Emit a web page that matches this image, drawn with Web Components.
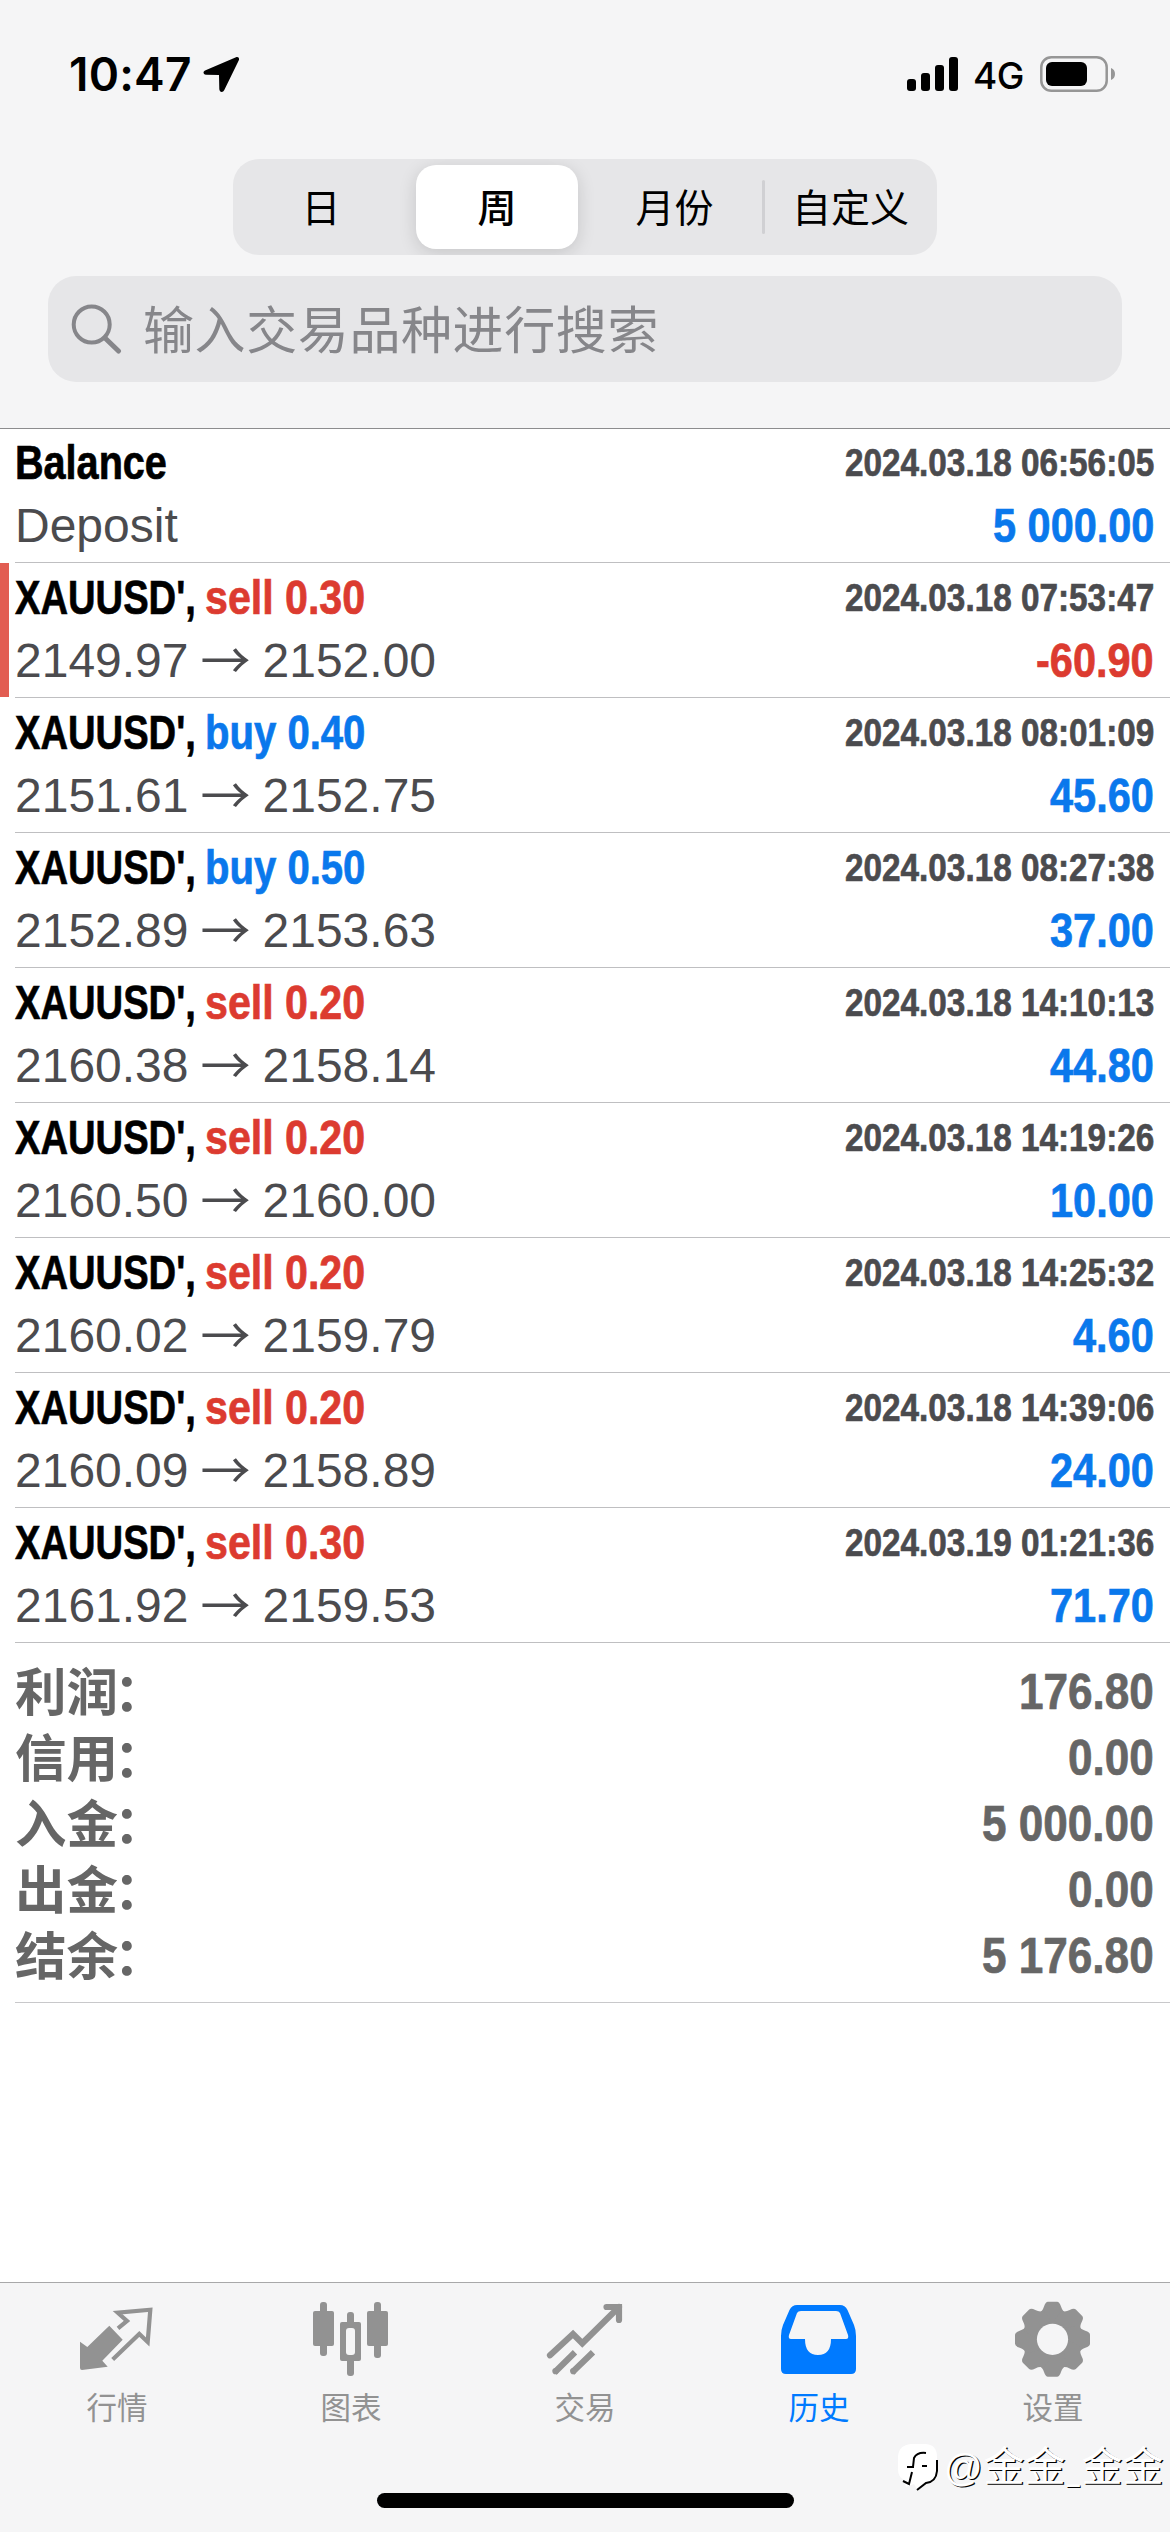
<!DOCTYPE html>
<html lang="zh-CN">
<head>
<meta charset="utf-8">
<title>历史</title>
<style>
html,
body {
	margin: 0;
	padding: 0;
	background: #fff;
}
</style>
</head>
<body>
<history-app></history-app>

<script>
function define(name, html, setup) {
	const template = document.createElement('template');
	template.innerHTML = html;
	window.customElements.define(name, class extends HTMLElement {
		connectedCallback() {
			if (!this.shadowRoot) {
				this.attachShadow({ mode: 'open' });
				this.shadowRoot.appendChild(template.content.cloneNode(true));
				if (setup) setup(this, this.shadowRoot);
			}
		}
	});
}

/* Text squeezed horizontally; the host takes the squeezed width */
define('narrow-text', `
<style>
:host {
	display: inline-block;
	white-space: nowrap;
}

span {
	display: inline-block;
	transform-origin: 0 50%;
	font-weight: bold;
	-webkit-text-stroke: 0.7px currentColor;
}
</style>
<span><slot></slot></span>
`, (host, root) => {
	const span = root.querySelector('span');
	const scale = parseFloat(host.getAttribute('scale') || '0.87');
	const width = span.getBoundingClientRect().width;
	span.style.transform = `scaleX(${scale})`;
	span.style.marginRight = `${width * (scale - 1)}px`;
});

define('status-bar', `
<style>
:host {
	display: flex;
	justify-content: space-between;
	height: 159px;
	box-sizing: border-box;
	padding: 46px 54px 0 69px;
	font-family: Inter, sans-serif;
	color: #000;
}

div {
	display: flex;
	align-items: center;
	height: 56px;
}

.time {
	font-size: 46px;
	font-weight: 600;
	letter-spacing: 0.2px;
	width: 134px;
}

.net {
	font-size: 37px;
	font-weight: 500;
	letter-spacing: -0.5px;
	margin: 3px 0 0 15px;
	width: 67px;
}

svg {
	display: block;
}
</style>
<div>
	<span class="time">10:47</span>
	<svg width="37" height="37" viewBox="0 0 37 37"><path d="M33 1.3 2 14.4C-.2 15.500 0 18.600 3 18.700L16 19 16.300 33C16.500 36.500 20 37 21.300 34L35.700 4.500C36.800 2 35.200.4 33 1.300Z"/></svg>
</div>
<div>
	<svg width="51" height="34" viewBox="0 0 51 34">
		<rect y="22" width="9" height="12" rx="3"/>
		<rect x="14" y="16" width="9" height="18" rx="3"/>
		<rect x="28" y="8" width="9" height="26" rx="3"/>
		<rect x="42" y="0" width="9" height="34" rx="3"/>
	</svg>
	<span class="net">4G</span>
	<svg width="76" height="36" viewBox="0 0 76 36">
		<rect x="1.300" y="1.300" width="65.400" height="33.400" rx="10" fill="none" stroke="#969696" stroke-width="2.500"/>
		<rect x="6" y="6" width="41" height="24" rx="6"/>
		<path d="M71 12Q75 13.500 75 18T71 24Z" fill="#969696"/>
	</svg>
</div>
`);

define('period-tabs', `
<style>
:host {
	display: flex;
	width: 704px;
	height: 96px;
	margin: 0 auto;
	border-radius: 26px;
	background: #e6e6e8;
	overflow: hidden;
	font: 39px/81px "Noto Sans CJK SC", sans-serif;
	color: #000;
}

span {
	flex: 0 0 176px;
	margin: 6px 0;
	text-align: center;
}

.active {
	flex: 0 0 162px;
	margin: 6px 7px;
	border-radius: 20px;
	background: #fff;
	font-weight: 500;
	box-shadow: 0 4px 18px rgba(0, 0, 0, 0.14);
}

.month {
	flex-basis: 179px;
}

.custom {
	flex-basis: 173px;
}

i {
	width: 3px;
	margin: 21px -1px 21px -2px;
	border-radius: 2px;
	background: #d0d0d3;
}
</style>
<span>日</span><span class="active">周</span><span class="month">月份</span><i></i><span class="custom">自定义</span>
`);

define('search-field', `
<style>
:host {
	display: flex;
	align-items: center;
	height: 106px;
	margin: 21px 48px 46px;
	padding-left: 23px;
	border-radius: 28px;
	background: #e6e6e8;
	font: 51px/103px "Noto Sans CJK SC", sans-serif;
	letter-spacing: 0.6px;
	color: #86868a;
}

svg {
	margin-right: 21px;
}

span {
	height: 106px;
}
</style>
<svg width="51" height="50" viewBox="0 0 51 50" fill="none" stroke="#86868a" stroke-linecap="round">
	<circle cx="20.700" cy="20.500" r="18" stroke-width="4"/>
	<path d="M34 34 47.500 47" stroke-width="5"/>
</svg>
<span><slot></slot></span>
`);

define('deal-row', `
<style>
:host {
	display: block;
	position: relative;
	height: 135px;
	box-sizing: border-box;
	padding: 5px 16px 0 15px;
	font: 48px/60px "Liberation Sans", sans-serif;
	color: #4b4b4e;
	background: linear-gradient(#bfbfc1, #bfbfc1) 15px 134px / 100% 1px no-repeat;
}

:host([marked])::before {
	content: '';
	position: absolute;
	left: 0;
	top: 0;
	width: 9px;
	height: 134px;
	background: #e25d52;
}

div {
	display: flex;
	justify-content: space-between;
}

div + div {
	margin-top: 3px;
}

.title {
	color: #000;
}

.side {
	margin-left: 9px;
}

.date {
	font-size: 39px;
}

.prices {
	display: flex;
}

.arrow {
	width: 74px;
	text-align: center;
	font: 50px/53px "Noto Sans CJK SC", sans-serif;
}

.red {
	color: #dc3b30;
}

.blue {
	color: #0a78ec;
}
</style>
<div>
	<span class="title"></span>
	<narrow-text class="date" scale="0.854"></narrow-text>
</div>
<div>
	<span class="prices"></span>
	<narrow-text class="amount" scale="0.864"></narrow-text>
</div>
`, (host, root) => {
	const deal = JSON.parse(host.getAttribute('data-deal'));
	const title = root.querySelector('.title');
	const prices = root.querySelector('.prices');
	const refill = (selector, text) => {
		const old = root.querySelector(selector);
		const element = document.createElement('narrow-text');
		element.className = old.className;
		element.setAttribute('scale', old.getAttribute('scale'));
		element.textContent = text;
		old.replaceWith(element);
		return element;
	};

	if (deal.side) {
		const color = deal.side === 'sell' ? 'red' : 'blue';
		const scale = deal.side === 'sell' ? 0.857 : 0.835;
		title.innerHTML = `<narrow-text scale="0.795">XAUUSD',</narrow-text><narrow-text class="side ${color}" scale="${scale}">${deal.side} ${deal.volume}</narrow-text>`;
		prices.innerHTML = `<span>${deal.open}</span><span class="arrow">→</span><span>${deal.close}</span>`;
	} else {
		title.innerHTML = '<narrow-text scale="0.825">Balance</narrow-text>';
		prices.textContent = 'Deposit';
	}
	refill('.date', deal.date);
	refill('.amount', deal.amount).classList.add(deal.amount[0] === '-' ? 'red' : 'blue');
});

define('total-row', `
<style>
:host {
	display: flex;
	justify-content: space-between;
	height: 66px;
	font: 50px/67px "Liberation Sans", "Noto Sans CJK SC", sans-serif;
	color: #666;
}

.label {
	font-size: 51.5px;
	font-weight: bold;
	line-height: 69px;
}

.colon {
	margin-left: -4px;
}
</style>
<span class="label"><span class="name"></span><span class="colon">：</span></span>
`, (host, root) => {
	root.querySelector('.name').textContent = host.getAttribute('label');
	const value = document.createElement('narrow-text');
	value.setAttribute('scale', '0.882');
	value.textContent = host.getAttribute('value');
	root.appendChild(value);
});

define('tab-item', `
<style>
:host {
	flex: 1;
	display: flex;
	flex-direction: column;
	align-items: center;
	padding-top: 17px;
	color: #929292;
	font: 30.5px/40px "Noto Sans CJK SC", sans-serif;
}

:host([active]) {
	color: #007aff;
}

::slotted(svg) {
	display: block;
	width: 78px;
	height: 78px;
	margin-bottom: 8px;
}
</style>
<slot></slot>
`);

define('author-mark', `
<style>
:host {
	position: absolute;
	left: 897px;
	top: 2442px;
	display: flex;
	font: 41px/43px "Noto Sans CJK SC", sans-serif;
	color: #fff;
	white-space: nowrap;
	text-shadow: 1.2px 1.2px 0 #000;
}

svg {
	margin-right: 4px;
}

.at {
	font-family: "Liberation Sans", sans-serif;
	font-size: 38px;
	margin-right: 1px;
}

.low {
	display: inline-block;
	transform: scaleX(0.6);
	margin: 0 -3.5px;
}
</style>
<svg width="43" height="52" viewBox="0 0 43 52">
	<path d="M14 2H29Q40 3 40 15V29Q40 40 30 41L21 49 17 42 9 45 7 38Q1 35 1 27V14Q2 3 14 2Z" fill="#fff"/>
	<path d="M40 18V29Q39 40 29 41L20 48M29 11Q20 10 17 16L16 25M10 25H17M25 24H30M15 30 12 42 6 39" fill="none" stroke="#000" stroke-width="2"/>
</svg>
<span><span class="at">@</span>金金<span class="low">_</span>金金</span>
`);

const deals = [
	{ date: '2024.03.18 06:56:05', amount: '5 000.00' },
	{ side: 'sell', volume: '0.30', open: '2149.97', close: '2152.00', date: '2024.03.18 07:53:47', amount: '-60.90' },
	{ side: 'buy', volume: '0.40', open: '2151.61', close: '2152.75', date: '2024.03.18 08:01:09', amount: '45.60' },
	{ side: 'buy', volume: '0.50', open: '2152.89', close: '2153.63', date: '2024.03.18 08:27:38', amount: '37.00' },
	{ side: 'sell', volume: '0.20', open: '2160.38', close: '2158.14', date: '2024.03.18 14:10:13', amount: '44.80' },
	{ side: 'sell', volume: '0.20', open: '2160.50', close: '2160.00', date: '2024.03.18 14:19:26', amount: '10.00' },
	{ side: 'sell', volume: '0.20', open: '2160.02', close: '2159.79', date: '2024.03.18 14:25:32', amount: '4.60' },
	{ side: 'sell', volume: '0.20', open: '2160.09', close: '2158.89', date: '2024.03.18 14:39:06', amount: '24.00' },
	{ side: 'sell', volume: '0.30', open: '2161.92', close: '2159.53', date: '2024.03.19 01:21:36', amount: '71.70' }
];

// one gear tooth, repeated every 45 degrees around the centre
const teeth = [0, 45, 90, 135, 180, 225, 270, 315].map(angle =>
	`<path d="M24.500 13Q28.500 11.500 30 6.500 31.500 1.800 34 1.800H43Q45.500 1.800 47 6.500 48.500 11.500 52.500 13L50 25H27Z" transform="rotate(${angle} 38.500 39.300)"/>`
).join('');

define('history-app', `
<style>
:host {
	display: flex;
	flex-direction: column;
	position: relative;
	width: 1170px;
	height: 2532px;
	overflow: hidden;
	background: #fff;
}

header {
	position: relative;
	z-index: 1;
	height: 428px;
	background: #f5f5f6;
	box-shadow: 0 1px 0 #8c8c8e;
}

.totals {
	margin-left: 15px;
	padding: 16px 16px 13px 0;
	border-bottom: 1px solid #c8c8ca;
}

footer {
	margin-top: auto;
	height: 250px;
	box-sizing: border-box;
	border-top: 1px solid #a8a8a9;
	background: #f5f5f6;
	display: flex;
	flex-direction: column;
	justify-content: space-between;
}

nav {
	display: flex;
}

.home {
	width: 417px;
	height: 15px;
	margin: 0 auto 24px;
	border-radius: 8px;
	background: #000;
}
</style>
<header>
	<status-bar></status-bar>
	<period-tabs></period-tabs>
	<search-field>输入交易品种进行搜索</search-field>
</header>
<main></main>
<section class="totals">
	<total-row label="利润" value="176.80"></total-row>
	<total-row label="信用" value="0.00"></total-row>
	<total-row label="入金" value="5 000.00"></total-row>
	<total-row label="出金" value="0.00"></total-row>
	<total-row label="结余" value="5 176.80"></total-row>
</section>
<footer>
	<nav>
		<tab-item>
			<svg viewBox="0 0 78 78" fill="currentColor">
				<path d="M31.300 25.700 44.700 39.700 24.300 60.700 29.700 66.700 4 70Q2 70 2 68V41.700L9.300 47Z"/>
				<path d="M40 28.300 49 21 39.700 12.700 72.300 9.700 69.700 42 61.300 34 34.700 59.500" fill="none" stroke="currentColor" stroke-width="4.200"/>
			</svg>
			行情
		</tab-item>
		<tab-item>
			<svg viewBox="0 0 78 78" fill="currentColor">
				<rect x="8" y="2" width="7" height="54" rx="3"/>
				<rect x="1" y="11" width="21" height="35" rx="2"/>
				<rect x="35" y="12" width="7" height="64" rx="3"/>
				<rect x="28" y="22" width="21" height="39" rx="2"/>
				<rect x="34" y="28" width="9" height="27" rx="3" fill="#f5f5f6"/>
				<rect x="62" y="2" width="7" height="56" rx="3"/>
				<rect x="55" y="11" width="21" height="35" rx="2"/>
			</svg>
			图表
		</tab-item>
		<tab-item>
			<svg viewBox="0 0 78 78" fill="none" stroke="currentColor" stroke-width="6.200">
				<path d="M4 55.300 27 34 36.300 43.300 73 7M60.500 7H73V20" stroke-linecap="round"/>
				<path d="M8.500 72.500 29 52.300M26 72.500 47 52.300"/>
				<g fill="currentColor" stroke="none"><circle cx="9.500" cy="71.200" r="3.100"/><circle cx="27.300" cy="71.200" r="3.100"/></g>
			</svg>
			交易
		</tab-item>
		<tab-item active>
			<svg viewBox="0 0 78 78" fill="currentColor" fill-rule="evenodd">
				<path d="M1 36Q1 30 3 25L9.500 10Q12 5 17 5H60Q65 5 67.500 10L74 25Q76 30 76 36V69Q76 74 71 74H6Q1 74 1 69ZM21 11Q18 11 17 13L9 35Q8 39 11 39H25Q25 55 38 55T51 39H66Q69 39 68 35L60 13Q59 11 56 11Z"/>
			</svg>
			历史
		</tab-item>
		<tab-item>
			<svg viewBox="0 0 78 78" fill="currentColor">
				<circle cx="38.500" cy="39.300" r="29"/>
				${teeth}
				<circle cx="38.500" cy="39.300" r="15.600" fill="#f5f5f6"/>
			</svg>
			设置
		</tab-item>
	</nav>
	<div class="home"></div>
</footer>
<author-mark></author-mark>
`, (host, root) => {
	const main = root.querySelector('main');
	deals.forEach(deal => {
		const row = document.createElement('deal-row');
		row.setAttribute('data-deal', JSON.stringify(deal));
		row.toggleAttribute('marked', deal.amount[0] === '-');
		main.appendChild(row);
	});
});
</script>
</body>
</html>
